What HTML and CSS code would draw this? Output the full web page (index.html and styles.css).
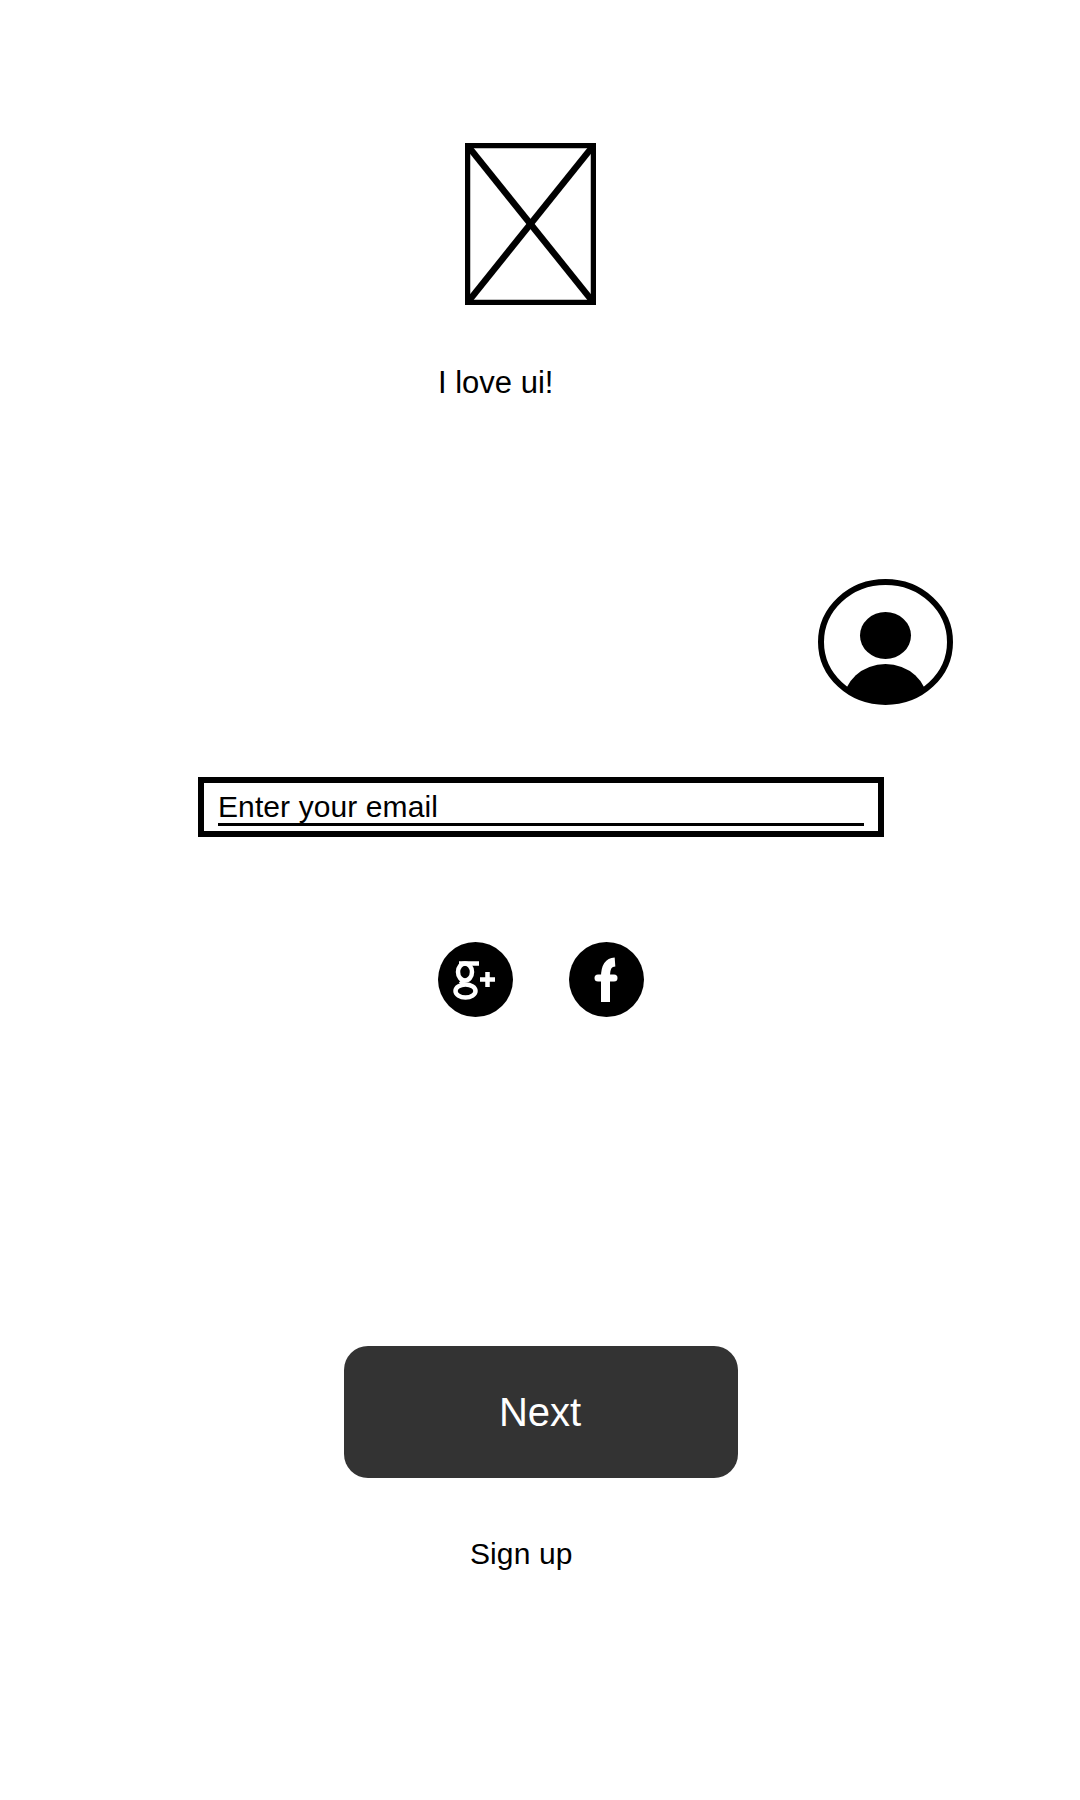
FILE: index.html
```html
<!DOCTYPE html>
<html lang="en">
<head>
<meta charset="utf-8">
<title>Sign in</title>
<link rel="stylesheet" href="styles.css">
</head>
<body>
<main class="screen">
  <svg class="logo" viewBox="0 0 131 162" aria-hidden="true">
    <g class="logo-lines">
      <rect x="2.5" y="2.5" width="126" height="157"/>
      <line class="logo-diagonal" x1="2.5" y1="2.5" x2="128.5" y2="159.5"/>
      <line class="logo-diagonal" x1="128.5" y1="2.5" x2="2.5" y2="159.5"/>
    </g>
  </svg>
  <p class="tagline">I love ui!</p>
  <svg class="avatar" viewBox="0 0 135 126" aria-hidden="true">
    <defs>
      <clipPath id="avatar-clip"><ellipse cx="67.5" cy="63" rx="65" ry="61"/></clipPath>
    </defs>
    <ellipse class="avatar-ring" cx="67.5" cy="63" rx="64.5" ry="60"/>
    <ellipse class="avatar-fill" cx="67.5" cy="56.5" rx="25.5" ry="23.5"/>
    <ellipse class="avatar-fill" cx="67.5" cy="123" rx="42" ry="38" clip-path="url(#avatar-clip)"/>
  </svg>
  <div class="field"><span class="field-text">Enter your email</span></div>
  <div class="socials">
    <svg class="social" viewBox="0 0 75 75" aria-label="Google Plus">
      <circle class="social-disc" cx="37.5" cy="37.5" r="37.5"/>
      <g class="social-mark">
        <ellipse cx="27" cy="30" rx="7" ry="8.5"/>
        <ellipse cx="27.5" cy="49" rx="10" ry="6.5"/>
        <path d="M21 21.5H41M26 38.5L22.5 42"/>
      </g>
      <path class="social-plus" d="M49.5 30V45M42 37.5H57"/>
    </svg>
    <svg class="social" viewBox="0 0 75 75" aria-label="Facebook">
      <circle class="social-disc" cx="37.5" cy="37.5" r="37.5"/>
      <path class="social-f" d="M36.5 60V35C36.5 25 39 20.5 46 20"/>
      <path class="social-f-bar" d="M29 36H45"/>
    </svg>
  </div>
  <button class="next" type="button">Next</button>
  <p class="signup">Sign up</p>
</main>
</body>
</html>
```
FILE: styles.css
```css
html, body {
  margin: 0;
  padding: 0;
  background: #fff;
}

.screen {
  display: flex;
  flex-direction: column;
  align-items: flex-start;
  width: 1080px;
  height: 1800px;
  font-family: "Liberation Sans", Arial, sans-serif;
  font-size: 30px;
  line-height: 34px;
  color: #000;
}

.logo {
  display: block;
  width: 131px;
  height: 162px;
  margin: 143px 0 0 465px;
}

.logo-lines {
  fill: none;
  stroke: #000;
  stroke-width: 5.5;
}

.logo-diagonal {
  stroke-width: 6.5;
}

.tagline {
  margin: 61px 0 0 438px;
  font-size: 31px;
}

.avatar {
  display: block;
  width: 135px;
  height: 126px;
  margin: 179px 0 0 818px;
}

.avatar-ring {
  fill: none;
  stroke: #000;
  stroke-width: 6;
}

.avatar-fill {
  fill: #000;
}

.field {
  box-sizing: border-box;
  width: 686px;
  height: 60px;
  margin: 72px 0 0 198px;
  padding: 7px 14px 0;
  border: 6px solid #000;
}

.field-text {
  display: block;
  height: 33px;
  letter-spacing: 0.1px;
  border-bottom: 3px solid #000;
}

.socials {
  display: flex;
  gap: 56px;
  margin: 105px 0 0 438px;
}

.social {
  display: block;
  width: 75px;
  height: 75px;
}

.social-disc {
  fill: #000;
}

.social-mark {
  fill: none;
  stroke: #fff;
  stroke-width: 4.5;
}

.social-plus {
  fill: none;
  stroke: #fff;
  stroke-width: 4.5;
}

.social-f {
  fill: none;
  stroke: #fff;
  stroke-width: 9;
}

.social-f-bar {
  fill: none;
  stroke: #fff;
  stroke-width: 7;
  stroke-linecap: round;
}

.next {
  display: flex;
  align-items: center;
  justify-content: center;
  width: 394px;
  height: 132px;
  margin: 329px 0 0 344px;
  padding: 0 2px 0 0;
  border: 0;
  border-radius: 24px;
  background: #333;
  color: #fff;
  font: inherit;
  font-size: 40px;
}

.signup {
  margin: 59px 0 0 470px;
  letter-spacing: 0.1px;
}
```
